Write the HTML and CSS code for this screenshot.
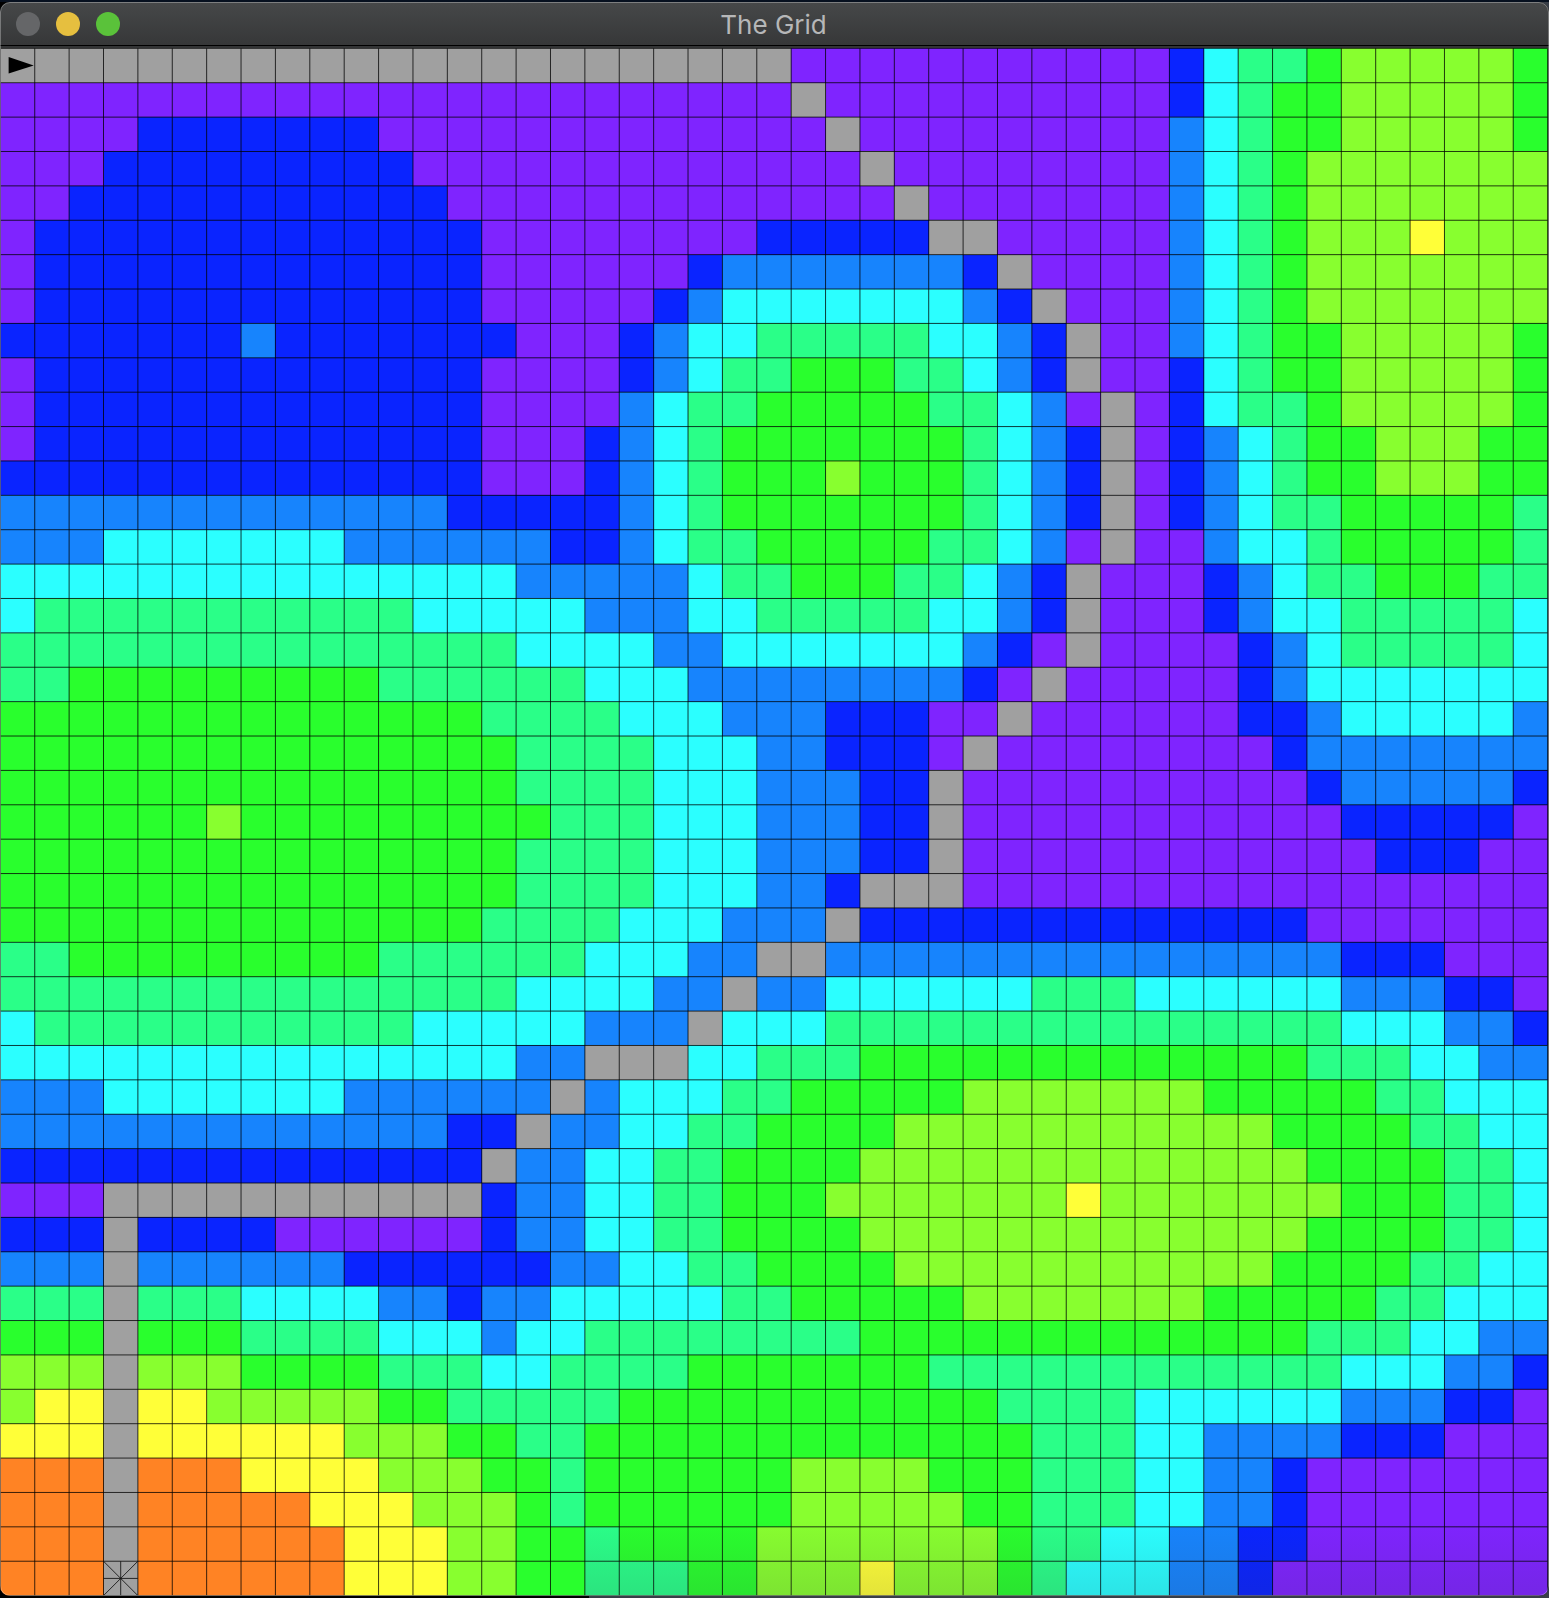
FILE: index.html
```
<!DOCTYPE html>
<html lang="en">
<head>
<meta charset="utf-8">
<meta name="viewport" content="width=device-width, initial-scale=1">
<title>The Grid</title>
<link rel="stylesheet" href="styles.css">
</head>
<body>
<main class="window">
  <header class="titlebar">
    <div class="controls">
      <button class="control control-close" type="button" aria-label="Close"></button>
      <button class="control control-minimize" type="button" aria-label="Minimize"></button>
      <button class="control control-zoom" type="button" aria-label="Zoom"></button>
    </div>
    <h1 class="title">The Grid</h1>
  </header>
  <svg class="board" viewBox="-0.01 -0.01 45.05 45.02" role="img" aria-label="Terrain grid with path">
    <defs>
      <linearGradient id="fade" x1="0" y1="0" x2="0" y2="1">
        <stop offset="0" stop-color="#334" stop-opacity="0"/>
        <stop offset="1" stop-color="#334" stop-opacity="0.14"/>
      </linearGradient>
    </defs>
    <g id="cells" class="cells"></g>
    <path id="lines" class="lines"/>
    <path class="agent" d="M0.24 0.25 L0.97 0.5 L0.24 0.73 Z"/>
    <path class="goal" d="M3 44 L4 45 M4 44 L3 45 M3.5 44 V45 M3 44.5 H4"/>
    <rect x="17" y="42.8" width="28.1" height="2.3" fill="url(#fade)"/>
  </svg>
</main>
<script src="grid.js"></script>
</body>
</html>
```
FILE: styles.css
```
html {
  background: linear-gradient(90deg, #000 38%, #383e47 38%);
}

body {
  margin: 0;
  border-top: 2px solid #06101f;
  font-family: Inter, "Liberation Sans", sans-serif;
}

.window {
  position: relative;
  overflow: hidden;
  border-radius: 10px;
  background: #333435;
}

.window::after {
  content: "";
  position: absolute;
  inset: 0;
  border: 1px solid rgba(255, 255, 255, 0.3);
  border-radius: 10px;
  pointer-events: none;
}

.titlebar {
  display: grid;
  grid-template-columns: 1fr auto 1fr;
  align-items: center;
  box-sizing: border-box;
  height: 46px;
  padding: 0 16px;
  border-bottom: 2px solid #333435;
  background: linear-gradient(#464849, #363738);
  box-shadow: inset 0 -1px #000;
}

.controls {
  display: flex;
  gap: 16px;
}

.control {
  width: 24px;
  height: 24px;
  padding: 0;
  border: 0;
  border-radius: 50%;
}

.control-close {
  background: #656668;
}

.control-minimize {
  background: #e6bf3f;
}

.control-zoom {
  background: #5ac23a;
}

.title {
  margin: 0;
  padding: 2px 2px 0 0;
  color: #b6b7b8;
  font-size: 26px;
  font-weight: 400;
  line-height: 32px;
}

.board {
  display: block;
  width: 100%;
}

.cells {
  shape-rendering: crispEdges;
}

.P { fill: #7f24ff; }
.B { fill: #0a24ff; }
.M { fill: #1784fd; }
.C { fill: #2bffff; }
.T { fill: #2aff88; }
.G { fill: #29ff2d; }
.L { fill: #88ff2f; }
.Y { fill: #ffff38; }
.O { fill: #ff8324; }
.X { fill: #a0a0a0; }

.lines {
  fill: none;
  stroke: #000;
  stroke-opacity: 0.9;
  stroke-width: 0.025;
}

.agent {
  fill: #000;
}

.goal {
  fill: none;
  stroke: #111;
  stroke-width: 0.025;
}
```
FILE: grid.js
```
// Each row is a list of runs: terrain letter followed by the number of cells.
const rows = [
  "X23 P11 B1 C1 T2 G1 L5 G1",
  "P23 X1 P10 B1 C1 T1 G2 L5 G1",
  "P4 B7 P13 X1 P9 M1 C1 T1 G2 L5 G1",
  "P3 B9 P13 X1 P8 M1 C1 T1 G1 L7",
  "P2 B11 P13 X1 P7 M1 C1 T1 G1 L7",
  "P1 B13 P8 B5 X2 P5 M1 C1 T1 G1 L3 Y1 L3",
  "P1 B13 P6 B1 M7 B1 X1 P4 M1 C1 T1 G1 L7",
  "P1 B13 P5 B1 M1 C7 M1 B1 X1 P3 M1 C1 T1 G1 L7",
  "B7 M1 B7 P3 B1 M1 C2 T5 C2 M1 B1 X1 P2 M1 C1 T1 G2 L5 G1",
  "P1 B13 P4 B1 M1 C1 T2 G3 T2 C1 M1 B1 X1 P2 B1 C1 T1 G2 L5 G1",
  "P1 B13 P4 M1 C1 T2 G5 T2 C1 M1 P1 X1 P1 B1 C1 T2 G1 L5 G1",
  "P1 B13 P3 B1 M1 C1 T1 G7 T1 C1 M1 B1 X1 P1 B1 M1 C1 T1 G2 L3 G2",
  "B14 P3 B1 M1 C1 T1 G3 L1 G3 T1 C1 M1 B1 X1 P1 B1 M1 C1 T1 G2 L3 G2",
  "M13 B5 M1 C1 T1 G7 T1 C1 M1 B1 X1 P1 B1 M1 C1 T2 G5 T1",
  "M3 C7 M6 B2 M1 C1 T2 G5 T2 C1 M1 P1 X1 P2 M1 C2 T1 G5 T1",
  "C15 M5 C1 T2 G3 T2 C1 M1 B1 X1 P3 B1 M1 C1 T2 G3 T2",
  "C1 T11 C5 M3 C2 T5 C2 M1 B1 X1 P3 B1 M1 C2 T5 C1",
  "T15 C4 M2 C7 M1 B1 P1 X1 P4 B1 M1 C1 T5 C1",
  "T2 G9 T6 C3 M8 B1 P1 X1 P5 B1 M1 C7",
  "G14 T4 C3 M3 B3 P2 X1 P6 B2 M1 C5 M1",
  "G15 T4 C3 M2 B3 P1 X1 P8 B1 M7",
  "G15 T4 C3 M3 B2 X1 P10 B1 M5 B1",
  "G6 L1 G9 T3 C3 M3 B2 X1 P11 B5 P1",
  "G15 T4 C3 M3 B2 X1 P12 B3 P2",
  "G15 T4 C3 M2 B1 X3 P17",
  "G14 T4 C3 M3 X1 B13 P7",
  "T2 G9 T6 C3 M2 X2 M15 B3 P3",
  "T15 C4 M2 X1 M2 C6 T3 C6 M3 B2 P1",
  "C1 T11 C5 M3 X1 C3 T15 C3 M2 B1",
  "C15 M2 X3 C2 T3 G13 T3 C2 M2",
  "M3 C7 M6 X1 M1 C3 T2 G5 L7 G5 T2 C3",
  "M13 B2 X1 M2 C2 T2 G4 L11 G4 T2 C2",
  "B14 X1 M2 C2 T2 G4 L13 G4 T2 C1",
  "P3 X11 B1 M2 C2 T2 G3 L7 Y1 L7 G3 T2 C1",
  "B3 X1 B4 P6 B1 M2 C2 T2 G4 L13 G4 T2 C1",
  "M3 X1 M6 B6 M2 C2 T2 G4 L11 G4 T2 C2",
  "T3 X1 T3 C4 M2 B1 M2 C5 T2 G5 L7 G5 T2 C3",
  "G3 X1 G3 T4 C3 M1 C2 T8 G13 T3 C2 M2",
  "L3 X1 L3 G4 T3 C2 T4 G7 T12 C3 M2 B1",
  "L1 Y2 X1 Y2 L5 G2 T5 G11 T4 C6 M3 B2 P1",
  "Y3 X1 Y6 L3 G2 T2 G13 T3 C2 M4 B3 P3",
  "O3 X1 O3 Y4 L3 G2 T1 G6 L4 G3 T3 C2 M2 B1 P7",
  "O3 X1 O5 Y3 L3 G1 T1 G6 L5 G2 T3 C2 M2 B1 P7",
  "O3 X1 O6 Y3 L2 G2 T1 G4 L7 G1 T2 C2 M2 B2 P7",
  "O3 X1 O6 Y3 L2 G2 T3 G2 L3 Y1 L3 G1 T1 C3 M2 B1 P8"
];

const svgNamespace = "http://www.w3.org/2000/svg";
const cells = document.getElementById("cells");

rows.forEach((row, y) => {
  let x = 0;
  row.split(" ").forEach((run) => {
    const length = Number(run.slice(1));
    const rect = document.createElementNS(svgNamespace, "rect");
    rect.setAttribute("class", run[0]);
    rect.setAttribute("x", x);
    rect.setAttribute("y", y);
    rect.setAttribute("width", length);
    rect.setAttribute("height", 1);
    cells.appendChild(rect);
    x += length;
  });
});

let lines = "";
for (let i = 0; i <= rows.length; i += 1) {
  lines += `M${i} 0V45M0 ${i}H45`;
}
document.getElementById("lines").setAttribute("d", lines);
```
